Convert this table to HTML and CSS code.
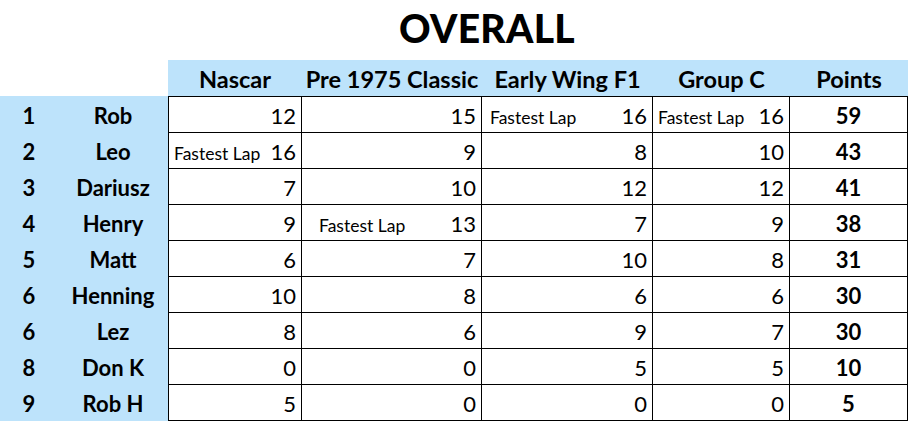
FILE: index.html
```html
<!DOCTYPE html>
<html lang="en">
<head>
<meta charset="utf-8">
<title>Overall</title>
<link rel="stylesheet" href="styles.css">
</head>
<body>
<div class="sheet">
  <div class="title">OVERALL</div>
  <div class="grid">
    <div class="blank"></div>
    <div class="blank"></div>
    <div class="hd">Nascar</div>
    <div class="hd">Pre 1975 Classic</div>
    <div class="hd">Early Wing F1</div>
    <div class="hd">Group C</div>
    <div class="hd">Points</div>

    <div class="rk first">1</div><div class="nm first">Rob</div>
    <div class="c first lc"><div class="in"><span></span><span>12</span></div></div>
    <div class="c first"><div class="in"><span></span><span>15</span></div></div>
    <div class="c first fl-b"><div class="in"><span class="fl">Fastest Lap</span><span>16</span></div></div>
    <div class="c first fl-a"><div class="in"><span class="fl">Fastest Lap</span><span>16</span></div></div>
    <div class="c first pt"><div class="in">59</div></div>

    <div class="rk">2</div><div class="nm">Leo</div>
    <div class="c lc fl-a"><div class="in"><span class="fl">Fastest Lap</span><span>16</span></div></div>
    <div class="c"><div class="in"><span></span><span>9</span></div></div>
    <div class="c"><div class="in"><span></span><span>8</span></div></div>
    <div class="c"><div class="in"><span></span><span>10</span></div></div>
    <div class="c pt"><div class="in">43</div></div>

    <div class="rk">3</div><div class="nm">Dariusz</div>
    <div class="c lc"><div class="in"><span></span><span>7</span></div></div>
    <div class="c"><div class="in"><span></span><span>10</span></div></div>
    <div class="c"><div class="in"><span></span><span>12</span></div></div>
    <div class="c"><div class="in"><span></span><span>12</span></div></div>
    <div class="c pt"><div class="in">41</div></div>

    <div class="rk">4</div><div class="nm">Henry</div>
    <div class="c lc"><div class="in"><span></span><span>9</span></div></div>
    <div class="c fl-c"><div class="in"><span class="fl">Fastest Lap</span><span>13</span></div></div>
    <div class="c"><div class="in"><span></span><span>7</span></div></div>
    <div class="c"><div class="in"><span></span><span>9</span></div></div>
    <div class="c pt"><div class="in">38</div></div>

    <div class="rk">5</div><div class="nm">Matt</div>
    <div class="c lc"><div class="in"><span></span><span>6</span></div></div>
    <div class="c"><div class="in"><span></span><span>7</span></div></div>
    <div class="c"><div class="in"><span></span><span>10</span></div></div>
    <div class="c"><div class="in"><span></span><span>8</span></div></div>
    <div class="c pt"><div class="in">31</div></div>

    <div class="rk">6</div><div class="nm">Henning</div>
    <div class="c lc"><div class="in"><span></span><span>10</span></div></div>
    <div class="c"><div class="in"><span></span><span>8</span></div></div>
    <div class="c"><div class="in"><span></span><span>6</span></div></div>
    <div class="c"><div class="in"><span></span><span>6</span></div></div>
    <div class="c pt"><div class="in">30</div></div>

    <div class="rk">6</div><div class="nm">Lez</div>
    <div class="c lc"><div class="in"><span></span><span>8</span></div></div>
    <div class="c"><div class="in"><span></span><span>6</span></div></div>
    <div class="c"><div class="in"><span></span><span>9</span></div></div>
    <div class="c"><div class="in"><span></span><span>7</span></div></div>
    <div class="c pt"><div class="in">30</div></div>

    <div class="rk">8</div><div class="nm">Don K</div>
    <div class="c lc"><div class="in"><span></span><span>0</span></div></div>
    <div class="c"><div class="in"><span></span><span>0</span></div></div>
    <div class="c"><div class="in"><span></span><span>5</span></div></div>
    <div class="c"><div class="in"><span></span><span>5</span></div></div>
    <div class="c pt"><div class="in">10</div></div>

    <div class="rk">9</div><div class="nm">Rob H</div>
    <div class="c lc"><div class="in"><span></span><span>5</span></div></div>
    <div class="c"><div class="in"><span></span><span>0</span></div></div>
    <div class="c"><div class="in"><span></span><span>0</span></div></div>
    <div class="c"><div class="in"><span></span><span>0</span></div></div>
    <div class="c pt"><div class="in">5</div></div>
  </div>
</div>
</body>
</html>
```

FILE: styles.css
```css
* { box-sizing: border-box; }
html, body { margin: 0; padding: 0; background: #fff; }
body {
  font-family: Lato, "Open Sans", sans-serif;
  color: #000;
  width: 913px;
  height: 428px;
  overflow: hidden;
}
.sheet { display: flex; flex-direction: column; }
.title {
  height: 60px;
  line-height: 56px;
  font-size: 39px;
  font-weight: 900;
  text-align: center;
  padding-left: 61px;
  letter-spacing: 0.3px;
}
.grid {
  display: grid;
  grid-template-columns: 58px 110px 134px 180px 171px 137px 118px;
  grid-template-rows: 36px 37px repeat(8, 36px);
}
.blank { background: #fff; }
.hd {
  background: #bde3fb;
  font-weight: 700;
  font-size: 23.5px;
  display: flex;
  align-items: center;
  justify-content: center;
  padding-top: 2px;
}
.hd:last-child { margin-right: 1px; }
.rk, .nm {
  background: #bde3fb;
  font-weight: 700;
  font-size: 22px;
  display: flex;
  align-items: center;
  justify-content: center;
  padding-top: 1px;
}
.rk.first, .nm.first { padding-top: 2px; }
.c {
  border-right: 1px solid #000;
  border-bottom: 1px solid #000;
  display: flex;
  align-items: center;
  font-size: 22px;
  padding: 1px 5px 0 5px;
}
.c.first { border-top: 1px solid #000; }
.c.lc { border-left: 1px solid #000; }
.in {
  width: 100%;
  display: flex;
  align-items: baseline;
  justify-content: space-between;
}
.fl { font-size: 17.5px; }
.fl-a { padding-left: 5px; }
.fl-b { padding-left: 8px; }
.fl-c { padding-left: 17px; }
.pt .in { justify-content: center; font-weight: 700; }
```
